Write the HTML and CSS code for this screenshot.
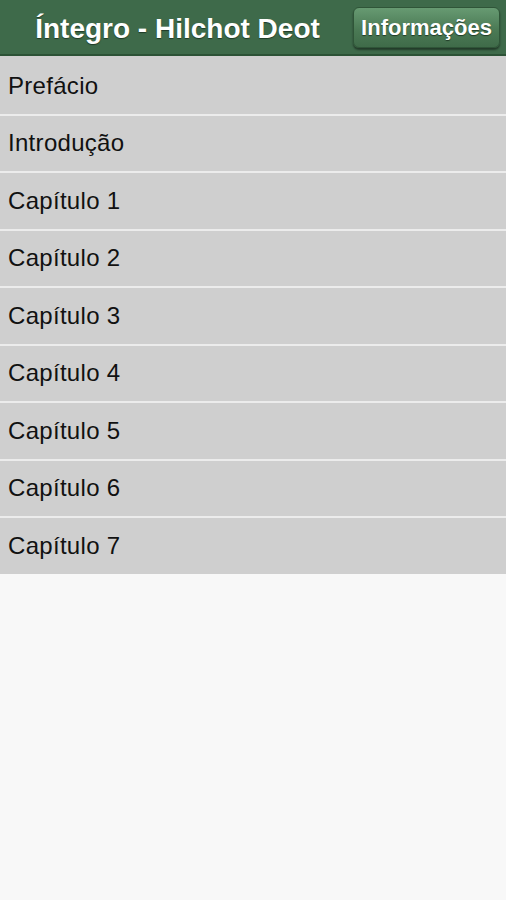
FILE: index.html
```html
<!DOCTYPE html>
<html lang="pt">
<head>
<meta charset="utf-8">
<title>Íntegro - Hilchot Deot</title>
<link rel="stylesheet" href="styles.css">
</head>
<body>
<header class="bar">
  <h1 class="title">Íntegro - Hilchot Deot</h1>
  <button class="btn">Informações</button>
</header>
<ul class="list">
  <li class="item">Prefácio</li>
  <li class="item">Introdução</li>
  <li class="item">Capítulo 1</li>
  <li class="item">Capítulo 2</li>
  <li class="item">Capítulo 3</li>
  <li class="item">Capítulo 4</li>
  <li class="item">Capítulo 5</li>
  <li class="item">Capítulo 6</li>
  <li class="item">Capítulo 7</li>
</ul>
</body>
</html>
```
FILE: styles.css
```css
html, body {
  margin: 0;
  padding: 0;
  background: #f8f8f8;
  font-family: "Liberation Sans", Arial, sans-serif;
}
.bar {
  height: 54px;
  background: #3e6a4a;
  border-bottom: 2px solid #2c5236;
  display: flex;
  align-items: center;
  padding-right: 6px;
}
.title {
  flex: 1;
  margin: 0;
  padding-top: 4px;
  text-align: center;
  color: #fff;
  font-size: 28px;
  font-weight: bold;
  text-shadow: 0 1px 1px #1f3a26;
  padding-left: 2px;
  white-space: nowrap;
}
.btn {
  height: 41px;
  width: 147px;
  margin-top: 1px;
  border: 1px solid #2f5538;
  border-radius: 6px;
  background: linear-gradient(#679a72, #4b7a55 55%, #3f6b49);
  color: #fff;
  font-family: "Liberation Sans", Arial, sans-serif;
  font-weight: bold;
  font-size: 22px;
  text-shadow: 0 1px 1px #1f3a26;
  box-shadow: 0 2px 2px rgba(0,0,0,0.45);
  padding: 0;
}
.list {
  list-style: none;
  margin: 0;
  padding: 0;
}
.item {
  height: 55.5px;
  display: flex;
  align-items: center;
  padding-left: 8px;
  background: #cfcfcf;
  border-top: 2px solid #ececec;
  color: #111;
  font-size: 24px;
  letter-spacing: 0.3px;
}
.item:first-child {
  border-top-color: #cfcfcf;
}
```
